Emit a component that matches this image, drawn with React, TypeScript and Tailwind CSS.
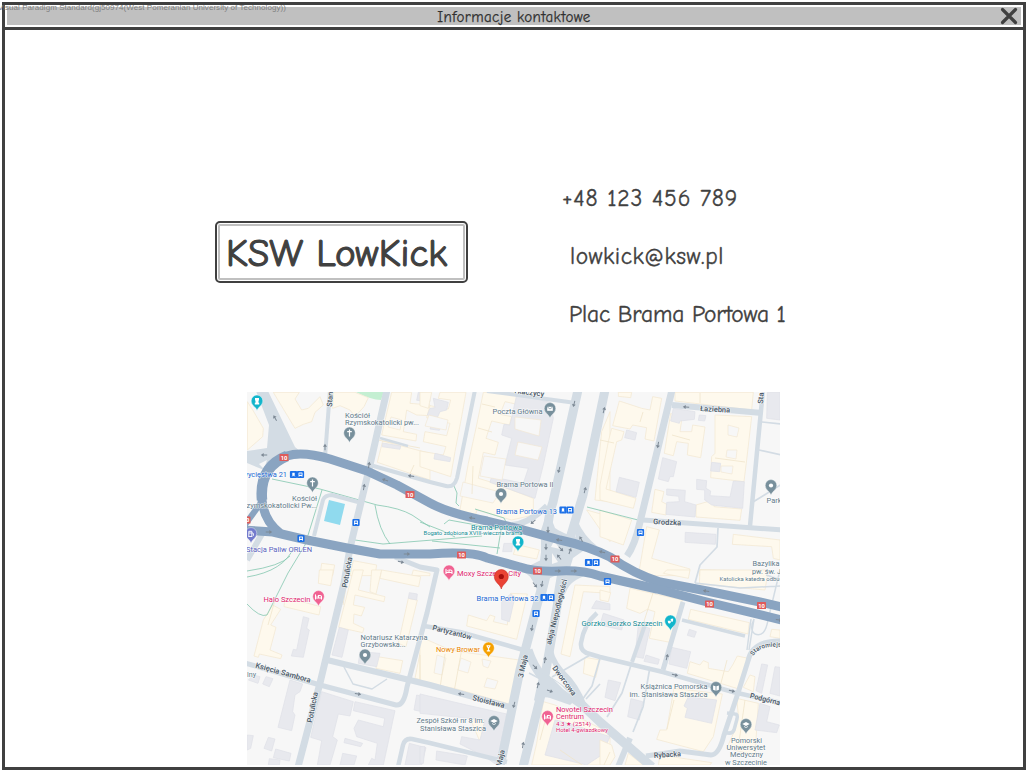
import type { ReactNode } from "react";

type Pt = [number, number];

/* Streets: path, width, on map coordinates */
const streets: [string, number][] = [
  ["M387 390L370 465L350 548L344 583L320 683L298 767", 7],
  ["M330 390L325 457", 4],
  ["M370 465L430 482L446 486Q454 488 457 478L475 390", 4],
  ["M380 438L408 446", 2.5],
  ["M314 536L323 500Q325 495 332 495L358 502", 4],
  ["M578 390L553 502Q547 520 547 540L541 590L520 670L500 767", 9],
  ["M605 390L583 495L568 545L560 590L550 647L543 687L523 767", 9],
  ["M547 506Q528 524 512 525", 6],
  ["M520 566Q540 577 540 590", 6],
  ["M528 650Q534 668 543 677L580 703L600 722L652 767", 9],
  ["M549 640Q549 658 562 672Q577 686 584 706", 5.5],
  ["M672 390L640 522Q635 545 627 556", 7],
  ["M672 405L762 413", 6],
  ["M763 390L757 452L750 526", 4.5],
  ["M643 520L700 524L782 530", 5],
  ["M424 626L460 632L527 651", 4.5],
  ["M395 557L420 567L437 570L427 613L407 687Q404 706 396 705L320 685L245 663", 5],
  ["M323 659L430 685L510 707", 6],
  ["M398 767L403 745Q405 738 412 739L430 743L507 762", 4.5],
  ["M597 613Q584 624 581 643Q580 652 590 654L600 657L663 672L733 692L782 703", 4.5],
  ["M683 602L663 670", 5],
  ["M646 622L632 662", 4],
  ["M682 620L745 636", 3.5],
  ["M782 641Q752 640 748 661L738 693L724 735Q719 755 711 755L680 751L646 756", 5],
  ["M727 713L735 714Q738 714 737 719L734 730Q732 735 724 732", 3.5],
  ["M630 738L618 767", 6],
  ["M487 391L576 403", 4],
  ["M247 560L262 534", 6],
  ["M762 422L782 424M759 450L782 455M753 502L782 484M718 528L717 547L700 565L695 583", 1.7],
  ["M632 662L622 693L607 717M650 667L643 707L633 732M600 684L586 699M552 677L590 655M600 658L592 686L582 700", 1.7],
  ["M344 667L353 684L372 689L387 679M529 673L546 682", 1.5],
  ["M780 570L768 620Q765 638 755 634Q749 630 754 619M751 619L747 650M754 619L749 650M766 575L782 580M695 583L740 588L782 586", 1.5],
];

const highways: [string, number][] = [
  ["M280 533Q264 521 262 500Q259 467 287 456Q302 451 330 459L367 471L397 485L430 503Q448 513 487 521L520 529L560 540Q588 546 610 557Q634 574 660 582L707 591L760 602L782 607", 9],
  ["M245 530L273 532L307 540L347 548L380 554L430 554Q472 551 487 558L520 567Q535 572 560 571Q582 570 600 576L657 589L707 602L782 620", 9],
  ["M244 526L263 500", 6],
  ["M262 500Q259 467 287 456", 10.5],
];

/* Building footprints, grouped on a third-pixel survey grid per sheet */
const sheets: { at: Pt; cream: string[]; grey: string[] }[] = [
  {
    at: [240, 385],
    cream: [
      "22,50 40,78 70,130 68,155 22,195",
      "100,22 178,22 165,42 185,75 205,70 240,35 250,60 225,82 215,110 190,118 165,130",
      "280,22 345,22 385,38 372,65 345,95 330,75 300,62 278,70",
      "455,22 515,22 510,55 570,60 570,92 530,90 500,75 490,140 530,148 528,168 425,150",
      "428,168 570,205 570,285 412,232",
      "245,535 284,540 278,572 240,572",
      "340,527 410,540 405,572 330,572",
      "520,555 570,565 570,572 515,572",
    ],
    grey: ["428,174 482,183 480,193 426,185", "535,22 570,26 570,50 530,46"],
  },
  {
    at: [420, 385],
    cream: [
      "0,22 35,22 25,70 0,62",
      "60,22 138,22 125,95 105,200 92,275 0,245 0,198 70,210 78,185 10,170 15,140 80,152 90,115 20,98 30,62 85,72 92,45 55,40",
      "190,22 270,22 310,32 300,60 255,50 240,88 275,95 268,120 215,108 198,160 235,172 225,210 190,202 175,280 215,292 340,340 340,390 275,405 170,375 165,400 118,385 145,235 170,120",
      "290,478 358,495 350,522 280,508",
      "545,140 570,80 570,350 525,345",
      "500,375 570,395 570,470 545,440",
    ],
    grey: [
      "290,30 392,52 400,100 370,240 345,340 210,292 215,275 310,295 325,250 255,240 275,160 245,150 252,118 270,120",
      "40,40 85,52 80,75 60,80 52,98 22,90 30,70 45,68",
      "45,205 92,218 90,230 42,222",
      "35,118 62,125 58,136 30,132",
      "252,475 278,475 275,500 248,500",
    ],
  },
  {
    at: [600, 385],
    cream: [
      "55,22 95,22 92,38 55,34",
      "58,48 125,70 150,75 158,35 185,40 162,168 135,162 140,128 98,120 90,132 38,122",
      "35,130 72,140 65,165 50,170 18,312 108,340 100,370 0,345 0,300 25,170",
      "225,22 460,22 455,75 225,48",
      "212,85 245,105 240,140 275,140 278,120 315,126 302,218 262,210 265,175 230,170 220,212 193,205",
      "345,90 455,95 440,225 432,290 332,278 335,215 345,205",
      "165,313 192,320 185,350 200,358 198,390 155,382",
      "288,360 340,345 342,365 425,372 420,406 288,396",
      "0,375 95,405 70,480 0,455",
      "140,425 178,435 155,520 270,552 265,572 115,572",
      "400,448 540,465 540,525 520,520 515,485 397,478",
      "300,554 455,558 452,572 298,572",
    ],
    grey: [
      "80,135 110,143 105,165 74,158",
      "58,277 118,292 108,337 48,320",
      "220,70 285,80 283,103 240,108 238,115 212,108",
      "298,90 318,92 314,108 295,106",
      "188,218 230,230 220,275 210,275 205,290 175,282",
      "200,312 256,316 254,350 288,360 285,396 198,388 200,352 238,350 236,334 200,330",
      "290,283 320,287 318,310 332,318 330,332 390,336 400,288 433,290 428,370 335,360 314,345 314,315 290,313",
      "335,232 362,235 359,260 332,258",
      "256,442 348,448 346,478 255,472",
      "502,22 540,22 540,105 500,100",
    ],
  },
  {
    at: [240, 570],
    cream: [
      "238,0 280,0 272,47 235,40",
      "135,82 242,110 237,135 132,110",
      "98,105 122,118 92,165 108,172 90,240 126,255 122,266 58,252 55,262 42,258 70,150",
      "340,0 370,0 355,60 435,80 432,95 345,75 340,105 374,112 364,138 342,132 340,160 372,175 368,188 296,172",
      "395,0 425,0 408,72 390,65",
      "425,0 542,20 536,50 420,25",
      "505,85 532,90 498,230 475,220",
      "412,260 488,272 480,310 408,295",
      "545,225 570,230 570,335 525,325",
    ],
    grey: [
      "190,140 207,145 200,175 208,180 190,262 154,258 160,238 170,240",
      "298,172 325,180 306,262 276,255",
      "508,68 532,72 530,90 505,85",
      "360,245 420,250 410,290 355,280",
      "40,315 60,320 54,340 25,330",
      "78,320 99,326 88,350 68,342",
      "150,330 188,342 180,365 165,375 158,425 165,435 155,482 114,472",
      "245,365 340,395 330,438 295,432 278,500 292,510 270,585 232,585 245,512 212,502",
      "345,395 465,422 430,585 385,585 395,565 405,570 412,520 350,500 342,475 355,450 430,470 434,445 340,422",
      "315,505 368,520 362,530 312,518",
      "22,495 40,497 32,535 22,540",
      "85,502 105,507 95,543 72,535",
      "107,537 153,550 148,573 100,563",
      "88,566 120,570 118,585 85,585",
      "530,375 570,385 570,430 522,420",
      "508,520 558,533 545,585 495,585",
      "308,550 350,558 342,585 300,585",
    ],
  },
  {
    at: [420, 570],
    cream: [
      "272,70 322,72 290,208 205,185 140,168 145,135 200,152 210,135 225,140 220,155 262,165",
      "0,200 80,235 120,245 298,270 268,402 102,355 0,335",
      "465,45 570,50 570,70 490,65 450,260 423,252",
      "495,262 540,270 527,322 490,310",
      "370,395 405,405 570,490 570,585 335,585 350,520",
      "140,422 240,440 225,530 180,515",
    ],
    grey: [
      "245,95 272,72 285,80 268,155 245,148",
      "0,372 140,405 260,432 230,585 195,560 120,522 125,500 180,510 195,450 0,430",
      "50,543 142,558 135,585 48,570",
      "405,450 430,455 570,500 545,555 500,585 375,555",
      "528,92 570,102 570,120 515,115",
      "0,530 15,530 10,580 0,580",
    ],
  },
  {
    at: [600, 570],
    cream: [
      "90,55 247,90 210,217 148,205 165,125 142,118 120,130 80,115",
      "272,118 448,158 444,192 265,148",
      "200,0 270,0 265,25 190,10",
      "300,0 505,0 495,60 298,42",
      "0,60 32,68 25,95 0,90",
      "270,275 300,285 310,272 325,278 325,295 385,305 398,285 412,258 445,265 420,358 262,310",
      "222,355 367,372 340,500 310,545 170,508 180,480 200,480",
      "410,385 475,400 465,555 380,535 405,480 415,435",
      "450,315 465,320 460,365 430,352",
      "515,178 540,180 540,205 510,200",
      "0,510 35,525 45,560 30,585 0,585",
      "85,550 130,585 75,585",
      "180,555 335,578 330,585 175,585",
    ],
    grey: [
      "10,130 72,150 65,180 0,165",
      "115,165 150,175 130,265 105,260",
      "215,232 272,245 260,295 207,282",
      "268,178 289,185 283,202 262,196",
      "138,255 178,268 174,283 132,274",
      "25,330 62,338 45,392 15,382",
      "93,386 128,395 118,450 83,440",
      "265,380 350,390 335,460 255,442 262,415 252,408",
      "485,282 503,285 485,370 468,362",
      "525,290 540,292 540,378 510,370",
      "480,400 510,410 500,455 538,465 530,488 465,480",
    ],
  },
];

const courtyards = [
  "391,417 402,420 400,430 388,427", "515,417 541,420 539,436 515,429", "518,442 542,447 538,460 515,455",
  "484,456 506,459 502,480 480,476", "463,482 500,492 493,503 460,496", "429,415 448,420 446,430 425,426",
  "728,425 739,428 737,437 728,435", "727,450 737,450 736,459 726,457", "721,466 733,466 732,474 721,472",
  "437,655 446,658 442,675 434,673", "482,659 491,661 488,668 483,666", "461,658 471,662 468,673 458,670",
  "487,678 498,681 495,689 484,687",
];

const arrows: [number, number, number][] = [
  [275, 418, 240], [264, 455, 180], [325, 447, 270], [369, 465, 280], [385, 480, 200], [411, 476, 190],
  [364, 487, 280], [269, 532, 0], [407, 554, 0], [401, 562, 15], [574, 404, 105], [604, 410, 285],
  [559, 470, 105], [585, 490, 285], [472, 518, 190], [533, 522, 140], [548, 530, 90], [559, 540, 190],
  [546, 547, 90], [546, 558, 90], [561, 549, 45], [559, 557, 230], [570, 551, 290], [581, 539, 240],
  [602, 552, 195], [558, 571, 0], [574, 571, 0], [535, 585, 50], [542, 584, 100], [532, 628, 100],
  [545, 660, 280], [535, 667, 45], [538, 685, 285], [550, 691, 20], [514, 705, 105], [523, 745, 280],
  [461, 694, 190], [358, 694, 10], [686, 407, 185], [658, 445, 100], [706, 591, 190], [779, 620, 10],
  [667, 657, 285], [675, 675, 15], [732, 691, 15],
];

type Label = { t: string; x: number; y: number; w: number; c: string; s?: number; r?: number; b?: boolean };
const slate = "#5f7a89";
const road = "#4f5d6b";
const pink = "#e0246f";
const blue = "#1967d2";
const teal = "#128b94";
const labels: Label[] = [
  { t: "Kościół", x: 345, y: 418, w: 25, c: slate },
  { t: "Rzymskokatolicki pw...", x: 345, y: 425, w: 74, c: slate },
  { t: "Kościół", x: 292, y: 501, w: 25, c: slate },
  { t: "Rzymskokatolicki Pw...", x: 242, y: 508, w: 75, c: slate },
  { t: "Zwycięstwa 21", x: 238, y: 477, w: 49, c: blue },
  { t: "Stacja Paliw ORLEN", x: 246, y: 551.5, w: 66, c: "#5a61bd" },
  { t: "Poczta Główna", x: 492.5, y: 414, w: 50, c: slate },
  { t: "Brama Portowa II", x: 496.5, y: 487, w: 57, c: slate },
  { t: "Brama Portowa 13", x: 496, y: 513.5, w: 61, c: blue },
  { t: "Brama Portowa", x: 471, y: 529.5, w: 51, c: teal },
  { t: "Bogato zdobiona XVIII-wieczna brama", x: 423.5, y: 535, w: 99, c: teal, s: 5.8 },
  { t: "Moxy Szczecin City", x: 457, y: 575.5, w: 64, c: pink },
  { t: "Brama Portowa 32", x: 476.5, y: 601, w: 62, c: blue },
  { t: "Halo Szczecin", x: 263.5, y: 601.5, w: 47, c: pink },
  { t: "Notariusz Katarzyna", x: 360.5, y: 639.5, w: 67, c: slate },
  { t: "Grzybowska...", x: 360.5, y: 647, w: 45, c: slate },
  { t: "Nowy Browar", x: 436, y: 652, w: 44, c: "#ea8600" },
  { t: "Zespół Szkół nr 8 im.", x: 416.5, y: 722.5, w: 68, c: slate },
  { t: "Stanisława Staszica", x: 420, y: 730.5, w: 66, c: slate },
  { t: "Novotel Szczecin", x: 556, y: 711.5, w: 57, c: pink },
  { t: "Centrum", x: 556, y: 719, w: 28, c: pink },
  { t: "4.3 ★ (2514)", x: 556, y: 725.5, w: 35, c: pink, s: 6 },
  { t: "Hotel 4-gwiazdkowy", x: 556, y: 732, w: 52, c: pink, s: 5.8 },
  { t: "Gorzko Gorzko Szczecin", x: 581.5, y: 626, w: 81, c: teal },
  { t: "Książnica Pomorska", x: 640.5, y: 688.5, w: 67, c: slate },
  { t: "im. Stanisława Staszica", x: 629.5, y: 697, w: 78, c: slate },
  { t: "Pomorski", x: 731, y: 742.5, w: 31, c: slate },
  { t: "Uniwersytet", x: 726.5, y: 749.5, w: 39, c: slate },
  { t: "Medyczny", x: 730, y: 757, w: 33, c: slate },
  { t: "w Szczecinie", x: 725, y: 764.5, w: 42, c: slate },
  { t: "Bazylika", x: 752.5, y: 566, w: 27, c: slate },
  { t: "pw. św. J", x: 752, y: 574, w: 29, c: slate },
  { t: "Katolicka katedra odbu", x: 719.5, y: 581, w: 60, c: slate, s: 5.8 },
  { t: "Park", x: 766.5, y: 502.5, w: 15, c: slate },
  { t: "lny", x: 247, y: 677, w: 9, c: slate },
  { t: "Łaziebna", x: 700, y: 411, w: 30, c: road, r: 3, b: true },
  { t: "Grodzka", x: 653, y: 524, w: 28, c: road, r: 3, b: true },
  { t: "Star", x: 763, y: 404, w: 14, c: road, r: -86, b: true },
  { t: "Stani", x: 332, y: 407, w: 17, c: road, r: -86, b: true },
  { t: "Tkaczycy", x: 513, y: 393, w: 31, c: road, r: 7, b: true },
  { t: "Potulicka", x: 347, y: 588, w: 31, c: road, r: -80, b: true },
  { t: "Potulicka", x: 312, y: 723, w: 31, c: road, r: -79, b: true },
  { t: "Księcia Sambora", x: 255, y: 667.5, w: 57, c: road, r: 15.5, b: true },
  { t: "Partyzantów", x: 432, y: 630, w: 40, c: road, r: 14, b: true },
  { t: "Stoisława", x: 472, y: 700, w: 33, c: road, r: 14, b: true },
  { t: "3 Maja", x: 523, y: 678, w: 23, c: road, r: -78, b: true },
  { t: "3 Maja", x: 500, y: 773, w: 23, c: road, r: -78, b: true },
  { t: "aleja Niepodległości", x: 551, y: 645, w: 67, c: road, r: -76, b: true },
  { t: "Dworcowa", x: 552, y: 668, w: 35, c: road, r: 54, b: true },
  { t: "Podgórna", x: 749.5, y: 698, w: 31, c: road, r: 14, b: true },
  { t: "Rybacka", x: 654, y: 758, w: 27, c: road, r: -4, b: true },
];

type PinKind = "cross" | "dot" | "mail" | "bed" | "cup" | "cap" | "book" | "tower" | "fuel" | "mask";
const pins: [number, number, string, PinKind][] = [
  [257, 401.5, "#12b5cb", "tower"],
  [349.5, 433.5, "#78909c", "cross"],
  [312.5, 483.5, "#78909c", "cross"],
  [251, 534, "#737bcd", "fuel"],
  [550, 409, "#78909c", "mail"],
  [501, 494.5, "#78909c", "dot"],
  [518, 542.5, "#12b5cb", "tower"],
  [771, 486, "#78909c", "dot"],
  [449, 571.5, "#f06292", "bed"],
  [318.5, 597, "#f06292", "bed"],
  [365, 655.5, "#78909c", "dot"],
  [488.5, 648.5, "#f5a000", "cup"],
  [494, 722, "#78909c", "cap"],
  [547.5, 717, "#f06292", "bed"],
  [670.5, 621.5, "#12b5cb", "mask"],
  [716, 688, "#78909c", "book"],
  [746, 725, "#78909c", "cap"],
];

const glyphs: Record<PinKind, ReactNode> = {
  cross: <path d="M0-4V3M-2.3-1.8H2.3" stroke="#fff" strokeWidth="1.2" />,
  dot: <circle r="2.1" cy="-.5" fill="#fff" />,
  mail: <g><rect x="-2.8" y="-2.2" width="5.6" height="4" fill="#fff" /><path d="M-2.7-2L0 0L2.7-2" fill="none" stroke="#78909c" strokeWidth=".7" /></g>,
  bed: <path d="M-3-2.3V2M-3 1H3V2M3 1V-.5Q3-1.5 1.5-1.5H0V1M-1.5-.7h.1" fill="none" stroke="#fff" strokeWidth="1.1" strokeLinecap="round" />,
  cup: <path d="M-2-2.7H2M-1.6-2.7L0 0L1.6-2.7M0 0V2.2M-1.7 2.4H1.7" fill="none" stroke="#fff" strokeWidth="1.1" />,
  cap: <path d="M-3.7-1L0-2.9L3.7-1L0 .9ZM-2 .9Q0 3 2 .9V1.8Q0 3.6-2 1.8Z" fill="#fff" />,
  book: <path d="M-2.9-2.5L-.4-1.7V2.7L-2.9 1.8ZM2.9-2.5L.4-1.7V2.7L2.9 1.8Z" fill="#fff" />,
  tower: <path d="M-2-3.4H2V-1.5L1.5-.6V1.2H2.2V2.9H-2.2V1.2H-1.5V-.6L-2-1.5Z" fill="#fff" />,
  fuel: <path d="M-2.2 2.5V-2.7H.8V2.5M-2.7 2.5H1.3M1-1.2L2.4-.5V1.8M-2-1H.6" fill="none" stroke="#fff" strokeWidth=".9" />,
  mask: <path d="M-2.8-.7H.3V1Q-.8 3-2.4 1.2ZM0-2.4L2.6-3V-1Q2.4.5 1.1.5" fill="#fff" />,
};

function Pin({ x, y, color, kind }: { x: number; y: number; color: string; kind: PinKind }) {
  return (
    <g transform={`translate(${x} ${y})`}>
      <path d="M0 9.3C-.6 5.4-5.8 4.2-5.8-.6A5.8 5.8 0 0 1 5.8-.6C5.8 4.2 .6 5.4 0 9.3Z" fill={color} stroke="#fff" strokeWidth=".4" />
      {glyphs[kind]}
    </g>
  );
}

function Stop({ x, y, tram = false }: { x: number; y: number; tram?: boolean }) {
  return (
    <g transform={`translate(${x} ${y})`}>
      <rect x="-3.6" y="-3.6" width="7.2" height="7.2" rx="1" fill="#1a6fe8" />
      {tram ? (
        <path d="M-1-1.6H1V1.2H-1ZM-1 1.2L-1.5 2.2M1 1.2L1.5 2.2" fill="#fff" stroke="#fff" strokeWidth=".4" />
      ) : (
        <g><rect x="-2" y="-1.9" width="4" height="3.5" rx=".5" fill="#fff" /><rect x="-1.2" y="-1" width="2.4" height="1.3" fill="#1a6fe8" /><path d="M-1.5 1.5V2.3M1.5 1.5V2.3" stroke="#fff" strokeWidth=".7" /></g>
      )}
    </g>
  );
}

const shields: Pt[] = [[284, 457.5], [410, 494.5], [461.5, 555], [537.5, 571], [615, 559], [709.5, 604], [761.5, 605.5], [246, 520]];
const stops: [number, number, boolean][] = [
  [293.5, 474.5, true], [300.5, 474.5, false], [356, 522.5, false], [301, 538.5, false],
  [563, 510, true], [570, 510, false], [588.5, 562.5, true], [596, 562.5, false], [640.5, 532.5, false],
  [544, 597.5, true], [551, 597.5, false], [536, 613.5, false], [607.5, 581.5, false],
];

function CityMap() {
  return (
    <svg viewBox="247 392 533 373" className="block h-[373px] w-[533px]">
      <rect x="247" y="392" width="533" height="373" fill="#f7f7f7" />
      <path d="M354 391H384L381 400Q371 400 354 391Z" fill="#c4efd2" />
      {sheets.map((s) => (
        <g key={s.at.join()} transform={`translate(${s.at[0]} ${s.at[1]}) scale(.33333)`} strokeWidth="2.2">
          {s.cream.map((p) => <polygon key={p} points={p} fill="#fef9ed" stroke="#f3e8d2" />)}
          {s.grey.map((p) => <polygon key={p} points={p} fill="#e8e9ee" stroke="#dfe1e8" />)}
        </g>
      ))}
      {courtyards.map((p) => <polygon key={p} points={p} fill="#f7f7f7" stroke="#f1e6d0" strokeWidth=".6" />)}
      <path
        d="M378 440L420 448M414 465L408 478M473 466L472 494M478 428L492 432M482 404L495 407M672 435L690 440M715 458L745 462M600 440L614 443M643 412L640 422M700 393V403M420 655V680M445 654L440 688M462 648L454 692M540 740L548 710M560 750L582 765M610 752L604 765M653 593L640 634M727 660L721 683M667 729L674 700M745 700L739 742M275 600L268 625M348 575L343 605"
        fill="none" stroke="#f0e4cb" strokeWidth=".8"
      />
      <g fill="none" stroke="#83c7af" strokeWidth=".8">
        <path d="M272 479L320 489L377 505Q400 508 412 515L430 527M322 490L305 545L288 573L267 615Q260 618 247 604M247 571Q281 566 290 556M247 577Q284 571 294 547M375 505Q379 530 390 544M355 540L383 544L445 539L482 536" />
        <path d="M444 524L449 520L498 529M432 541L500 548M420 522L443 531L455 537M454 486L457 493L456 503L459 506M475 509L504 518L507 524M501 530L497 554M587 507L638 520" />
      </g>
      <path d="M256 391H268L295 447L307 457L283 460L264 470L247 463V451L267 448L269 425Z" fill="#d3dce4" />
      <path d="M259 464L267 460L264 469Z" fill="#f7f7f7" />
      <path d="M548 510L555 528Q560 532 577 538L590 546L573 558L570 568L588 575Q570 580 566 592L558 605L541 595L525 568L541 560V530ZM577 520Q584 536 597 546L575 542Z" fill="#d3dce4" />
      <path d="M554 541L560 549L551 547ZM552 553L558 562L552 564ZM564 556L568 565L561 563ZM550 578L557 575L552 604L546 615L541 630L539 622Z" fill="#f7f7f7" />
      <g fill="none" stroke="#d3dce4" strokeLinejoin="round">
        {streets.map(([d, w]) => <path key={d} d={d} strokeWidth={w} />)}
      </g>
      <path d="M540 672L555 680L578 698L570 705L550 698Q541 695 538 704L534 700Z" fill="#d3dce4" />
      <path d="M554 680L561 685L571 695L563 689Z" fill="#f7f7f7" />
      <path d="M329 500L345 504L340 525L324 521Z" fill="#90daee" />
      <g fill="none" stroke="#8aa4c1" strokeLinejoin="round">
        {highways.map(([d, w]) => <path key={d} d={d} strokeWidth={w} />)}
      </g>
      {arrows.map(([x, y, r]) => (
        <path key={`${x}-${y}`} transform={`translate(${x} ${y}) rotate(${r})`} d="M-3.2-.5H.3V-2L3.2 0L.3 2V.5H-3.2Z" fill="#7d8995" />
      ))}
      {shields.map(([x, y]) => (
        <g key={x}>
          <rect x={x - 4.5} y={y - 3.5} width="9" height="7" rx=".6" fill="#de5b5b" />
          <text x={x} y={y + 2.1} textAnchor="middle" className="fill-white font-['Roboto',sans-serif] text-[5.8px] font-bold">10</text>
        </g>
      ))}
      {stops.map(([x, y, tram]) => <Stop key={`${x}-${y}`} x={x} y={y} tram={tram} />)}
      <g className="font-['Roboto',sans-serif]" stroke="#fff" strokeWidth="1.2" strokeLinejoin="round" strokeOpacity=".7" paintOrder="stroke">
        {labels.map((l) => (
          <text
            key={`${l.t}-${l.x}`} x={l.x} y={l.y} fill={l.c} fontSize={l.s ?? 7.6} fontWeight={l.b ? 600 : 400}
            textLength={l.w} lengthAdjust="spacingAndGlyphs" transform={l.r ? `rotate(${l.r} ${l.x} ${l.y})` : undefined}
          >
            {l.t}
          </text>
        ))}
        <path id="staromiejska" d="M753 656Q762 643 790 648" fill="none" stroke="none" />
        <text fill={road} fontSize="6.4" fontWeight="600"><textPath href="#staromiejska">Staromiejska</textPath></text>
      </g>
      {pins.map(([x, y, color, kind]) => <Pin key={`${x}-${y}`} x={x} y={y} color={color} kind={kind} />)}
      <path d="M501.3 589C500.2 584 494.3 582.5 494.3 576.5A7 7 0 0 1 508.3 576.5C508.3 582.5 502.4 584 501.3 589Z" fill="#ea4335" stroke="#c5221f" strokeWidth=".5" />
      <circle cx="501.3" cy="576.5" r="2.6" fill="#a50e0e" />
    </svg>
  );
}

export default function App() {
  return (
    <div className="relative h-[774px] w-[1030px] overflow-hidden bg-white pt-[2px] pl-[2px] font-['Comic_Neue','Comic_Sans_MS','Lato',sans-serif] text-[#404040]">
      <div className="flex h-[768px] w-[1024px] flex-col border-3 border-[#404040]">
        <header className="h-[25px] shrink-0 border-b-3 border-[#404040] p-[2px]">
          <div className="relative flex h-[18px] items-center justify-center bg-[#c0c0c0]">
            <h1 className="pt-px text-[15px] leading-[18px] tracking-[0.38px] whitespace-nowrap text-[#303030] [-webkit-text-stroke:0.25px_#303030]">Informacje kontaktowe</h1>
            <svg viewBox="0 0 18 18" className="absolute top-0 right-[3px] h-[18px] w-[18px]">
              <path d="M2.5 2.5L15.5 15.5M15.5 2.5L2.5 15.5" stroke="#404040" strokeWidth="3.2" strokeLinecap="round" />
            </svg>
          </div>
        </header>
        <main className="flex flex-col">
          <section className="flex h-[362px] pl-[210px]">
            <div className="mt-[191px] h-[62px] w-[253px] rounded-[5px] border-2 border-[#404040] p-px">
              <div className="flex h-full items-center rounded-[2px] border-2 border-[#c0c0c0] pt-[3px] pl-[6px]">
                <span className="text-[39px] leading-[50px] whitespace-nowrap [-webkit-text-stroke:1.1px_#404040]">KSW LowKick</span>
              </div>
            </div>
            <address className="mt-[154px] ml-[94px] flex flex-col gap-[28px] text-[23.5px] leading-[30px] whitespace-nowrap not-italic [-webkit-text-stroke:0.35px_#404040]">
              <span className="tracking-[0.85px]">+48 123 456 789</span>
              <span className="pl-[8px] tracking-[0.5px]">lowkick@ksw.pl</span>
              <span className="pl-[7px] tracking-[-0.15px]">Plac Brama Portowa 1</span>
            </address>
          </section>
          <div className="pl-[242px]"><CityMap /></div>
        </main>
      </div>
      <p className="absolute top-[3px] left-[-2px] font-['Liberation_Sans',sans-serif] text-[8px] leading-[10px] tracking-[0.05px] whitespace-nowrap text-[#808080]">
        Visual Paradigm Standard(gj50974(West Pomeranian University of Technology))
      </p>
    </div>
  );
}
